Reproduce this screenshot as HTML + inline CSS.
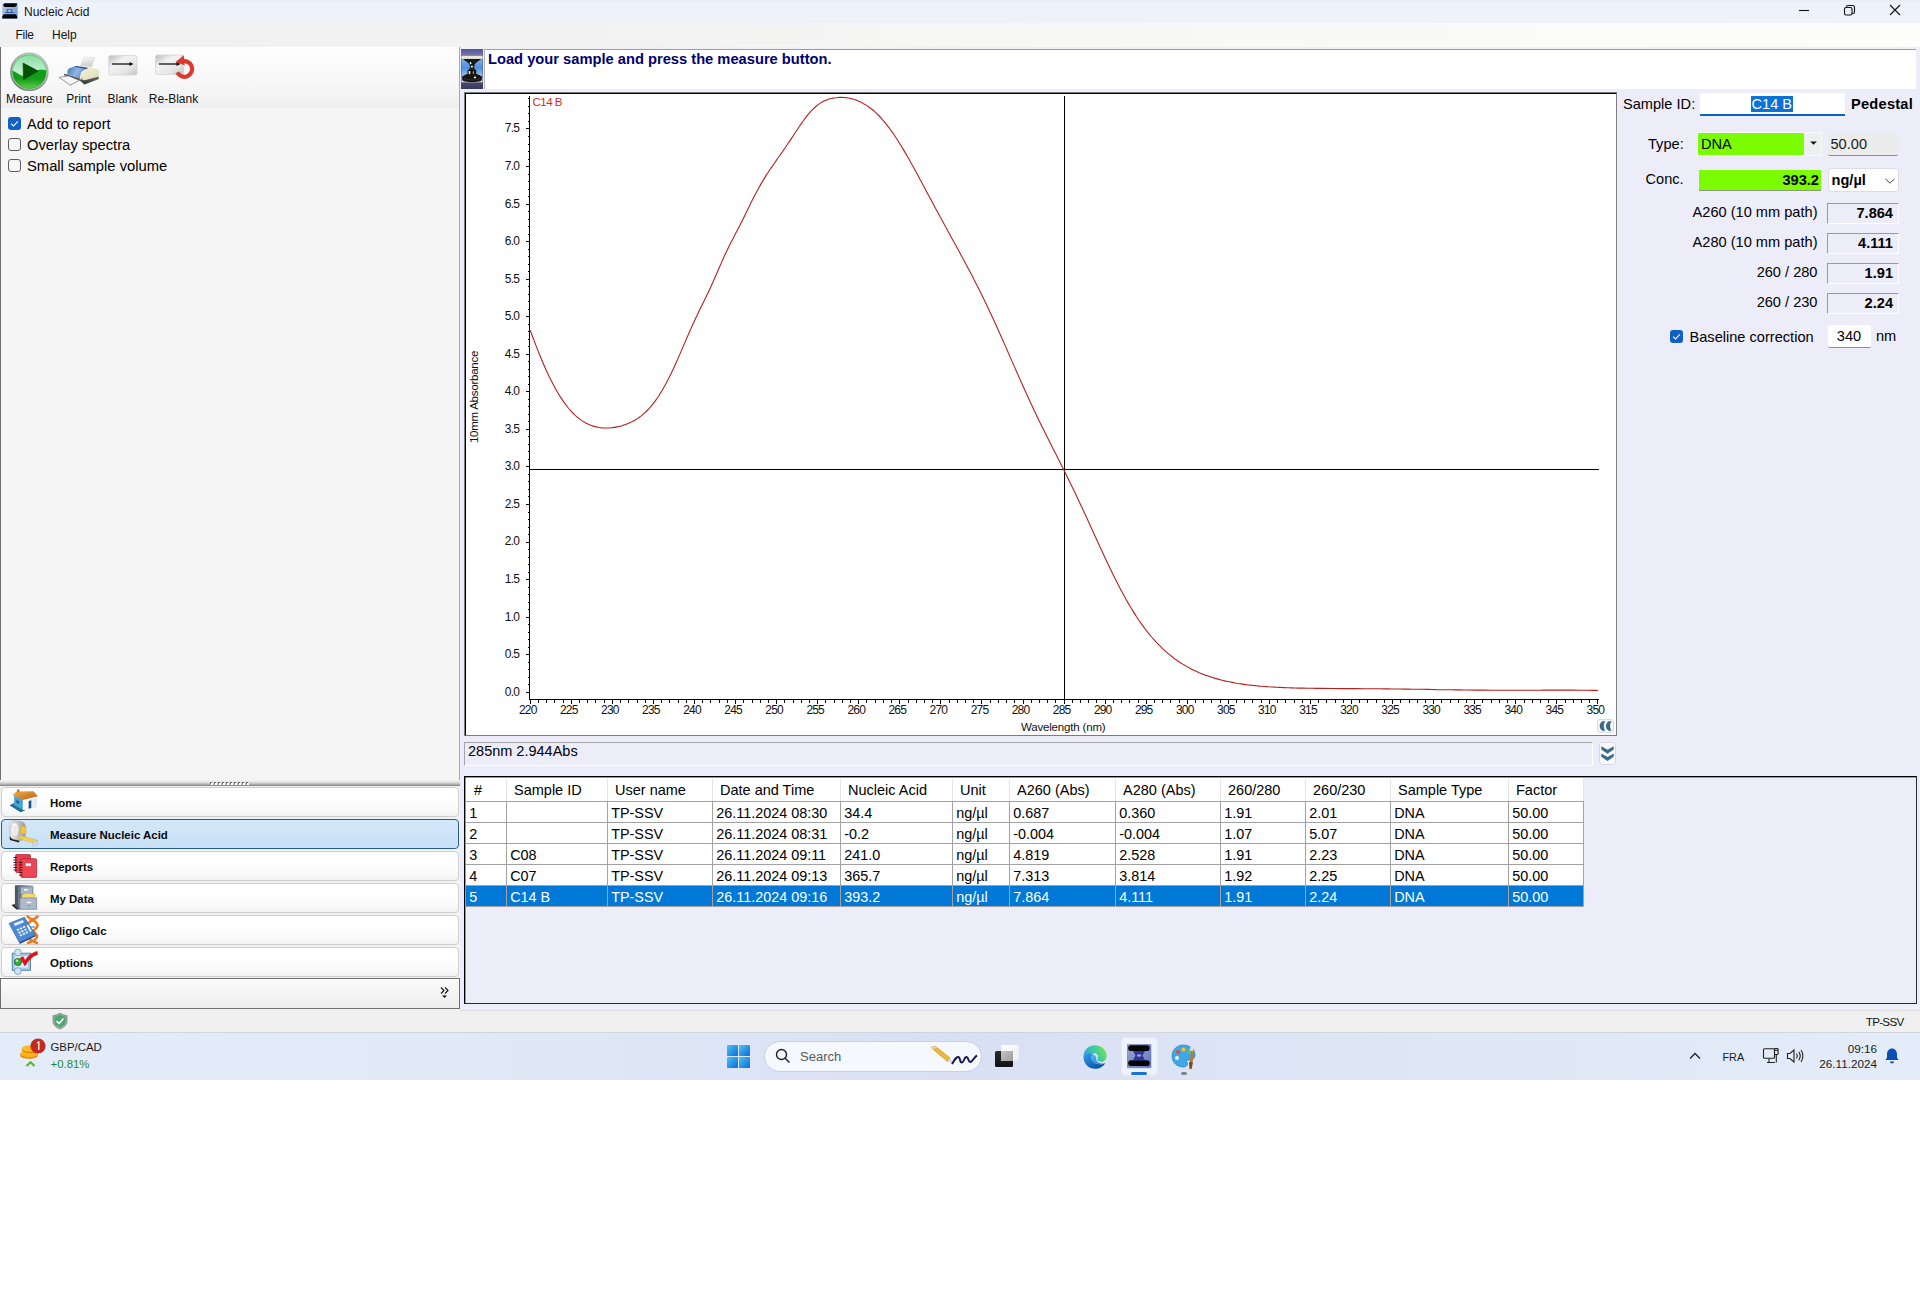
<!DOCTYPE html>
<html><head><meta charset="utf-8"><title>Nucleic Acid</title>
<style>
*{box-sizing:border-box;margin:0;padding:0}
html,body{width:1920px;height:1312px;background:#fff;overflow:hidden}
body{font-family:"Liberation Sans",sans-serif;color:#000;position:relative;font-size:14.5px}
.a{position:absolute;white-space:pre}
.t{position:absolute;white-space:pre;line-height:1}
.b{font-weight:700}
</style></head><body>
<div class="a" style="left:0;top:0;width:1920px;height:23px;background:linear-gradient(180deg,#e7ebf5 0,#ecf0f9 2px,#eef3fb 5px,#eef3fb 19px,#f0f2f6 23px)"></div>
<svg class="a" style="left:2px;top:3px" width="16" height="16" viewBox="2 3 16 16">
<defs><linearGradient id="gTi" x1="0" y1="0" x2="1" y2="1"><stop offset="0" stop-color="#b4cdf0"/><stop offset="1" stop-color="#6f93c8"/></linearGradient></defs>
<rect x="2.200" y="3.200" width="15.500" height="15.500" fill="url(#gTi)"/>
<path d="M3,5.300L4.500,3.300H16.800V5.500L15,7.100H4.600Z" fill="#050608"/>
<path d="M4,14.200H15.500L17,16V18.500H2.300V16Z" fill="#050608"/>
<path d="M6.500,9.200H12.500V10L11.800,10.300V11.600L13.800,12.300V12.900H5.200V12.300L7.200,11.600V10.300L6.500,10Z" fill="#2c5c9c"/>
<ellipse cx="9.500" cy="10.900" rx="1.600" ry="0.800" fill="#bfe0ff"/>
</svg>
<div class="t" style="left:24px;top:6px;font-size:12px;color:#111">Nucleic Acid</div>
<svg class="a" style="left:1790px;top:0" width="120" height="22" viewBox="0 0 120 22" fill="none" stroke="#111" stroke-width="1.1">
<path d="M9,10.5H19"/>
<rect x="54.5" y="7.5" width="7.5" height="7.5" rx="1.5"/><path d="M56.5,7.5V7A1.5,1.5 0 0 1 58,5.5H62.5A2,2 0 0 1 64.5,7.5V12A1.5,1.5 0 0 1 63,13.5H62"/>
<path d="M100,5L110,15M110,5L100,15"/>
</svg>
<div class="a" style="left:0;top:23px;width:1920px;height:24px;background:linear-gradient(90deg,#f0f0f0 0%,#f3f3f3 35%,#f6f6f5 50%,#fdfdfc 100%)"></div>
<div class="t" style="left:15.5px;top:28.5px;font-size:12px;letter-spacing:-0.300px;color:#111">File</div>
<div class="t" style="left:52px;top:28.5px;font-size:12px;color:#111">Help</div>
<div class="a" style="left:0;top:47px;width:460px;height:962px;background:#f5f5f5"></div>
<div class="a" style="left:460px;top:47px;width:1460px;height:963px;background:#ededfa"></div>
<div class="a" style="left:0;top:47px;width:459px;height:61px;background:linear-gradient(180deg,#fdfdfd 0%,#f8f8f8 55%,#efefef 100%)"></div>
<div class="a" style="left:0;top:47px;width:1px;height:733px;background:#6d6d6d"></div>
<div class="a" style="left:459px;top:47px;width:1px;height:733px;background:#a9a9a9"></div>
<svg class="a" style="left:0;top:47px" width="240" height="62" viewBox="0 47 240 62">
<defs>
<linearGradient id="gRing" x1="0.800" y1="0" x2="0.200" y2="1"><stop offset="0" stop-color="#c4c4c4"/><stop offset="1" stop-color="#737373"/></linearGradient><linearGradient id="gMint" x1="0" y1="0" x2="0" y2="1"><stop offset="0" stop-color="#7cd894"/><stop offset="0.250" stop-color="#a2e6b4"/><stop offset="0.500" stop-color="#c0f0cc"/><stop offset="1" stop-color="#c6f2d0"/></linearGradient>
<linearGradient id="gGreen" x1="0" y1="0" x2="0" y2="1"><stop offset="0" stop-color="#12a01a"/><stop offset="0.400" stop-color="#139c18"/><stop offset="0.700" stop-color="#4cbf3a"/><stop offset="1" stop-color="#6fd24a"/></linearGradient>
<linearGradient id="gBtn" x1="0" y1="0" x2="1" y2="1"><stop offset="0" stop-color="#b9b9b9"/><stop offset="0.35" stop-color="#f2f2f2"/><stop offset="0.7" stop-color="#e6e6e6"/><stop offset="1" stop-color="#c2c2c2"/></linearGradient>
<linearGradient id="gPrB" x1="0" y1="0.300" x2="1" y2="0.600"><stop offset="0" stop-color="#4f7dbd"/><stop offset="0.450" stop-color="#8fb6e6"/><stop offset="1" stop-color="#4d78b8"/></linearGradient><linearGradient id="gPap" x1="0" y1="0" x2="0.300" y2="1"><stop offset="0" stop-color="#fafafa"/><stop offset="1" stop-color="#cfcfd2"/></linearGradient><linearGradient id="gPrC" x1="0" y1="0" x2="1" y2="1"><stop offset="0" stop-color="#f3f2da"/><stop offset="1" stop-color="#dddbb2"/></linearGradient><linearGradient id="gPrD" x1="0" y1="0" x2="0" y2="1"><stop offset="0" stop-color="#6a7268"/><stop offset="1" stop-color="#2c322c"/></linearGradient>
</defs>
<circle cx="29.400" cy="71.800" r="19.300" fill="url(#gRing)"/>
<circle cx="29.400" cy="71.800" r="17.700" fill="#b4e6c0"/>
<clipPath id="cpM"><circle cx="29.400" cy="71.800" r="16.900"/></clipPath>
<g clip-path="url(#cpM)"><rect x="10" y="52" width="40" height="40" fill="url(#gMint)"/>
<path d="M10,71C15,69.500 18,75.500 24,76C31,76.500 36,69 42,69.500C45,69.800 47,70.500 50,71.500V93H10Z" fill="url(#gGreen)"/></g>
<circle cx="29.400" cy="71.800" r="16.900" fill="none" stroke="#2f9a3a" stroke-width="0.700" opacity="0.700"/>
<path d="M23.100,63.100L38.200,71.100L23.600,79.600Z" fill="#035204" stroke="#035204" stroke-width="0.800" stroke-linejoin="round"/>
<!-- printer -->
<path d="M83.900,57.300L94.900,57.300L91.500,67.100L80.500,65.900Z" fill="url(#gPap)" stroke="#cfcfcf" stroke-width="0.400"/>
<path d="M64,73.800L67.400,74.400L77.200,77.400L79.900,78.400V80.800L64,75.300Z" fill="#50545a"/>
<path d="M59.200,77.400L68.600,75.900L79.300,80.500L70.200,85.100Z" fill="#f1f1f5" stroke="#6e6e72" stroke-width="0.700"/>
<path d="M61,77.700L68.500,76.600L77.500,80.400L70.200,84Z" fill="#f6f6f9"/>
<path d="M67.400,71.300C67.700,69.500 68.800,68.400 69.900,68L76,65.900L88.500,68L84.500,70.100C82.500,71 81,72.300 80.800,73.800L79.900,78.400L77.200,77.400L67.400,74.400Z" fill="url(#gPrB)"/>
<path d="M76,65.900L88.500,68L86.500,69.100L74,66.700Z" fill="#2f4f86"/>
<path d="M84.500,70.100L88.500,68L92.100,67.700L98.500,69.800C98.900,72 98.900,74.500 98.800,76.500L84.500,80.200L80.500,79L80.800,73.800C81,72.300 82.500,71 84.500,70.100Z" fill="url(#gPrC)"/>
<path d="M80.500,79L84.500,80.200L98.800,76.500V79L84.500,84.500L79.900,80.800Z" fill="url(#gPrD)"/>
<rect x="81.200" y="78.200" width="1.300" height="0.600" fill="#5a5a40"/>
<!-- blank -->
<rect x="108.700" y="55.500" width="28.300" height="19.500" rx="2" fill="url(#gBtn)" stroke="#d5d5d5" stroke-width="0.8"/>
<path d="M112,64H132" stroke="#111" stroke-width="1.3"/><path d="M133.500,64L129.500,62V66Z" fill="#111"/>
<!-- reblank -->
<rect x="155.500" y="55" width="28.300" height="19.500" rx="2" fill="url(#gBtn)" stroke="#d5d5d5" stroke-width="0.8"/>
<path d="M159,64H179" stroke="#111" stroke-width="1.3"/><path d="M180.500,64L176.500,62V66Z" fill="#111"/>
<path d="M181.500,61.700A7.800,7.800 0 1 1 177.300,72.300" fill="none" stroke="#dc3a2e" stroke-width="4.200"/>
<path d="M175.300,62.300L183.800,55.300L184.600,65.300Z" fill="#dc3a2e"/>
</svg>
<div class="t" style="left:6px;top:92.500px;font-size:12px;width:46px;text-align:center;color:#111">Measure</div>
<div class="t" style="left:58px;top:92.500px;font-size:12px;width:41px;text-align:center;color:#111">Print</div>
<div class="t" style="left:102px;top:92.500px;font-size:12px;width:41px;text-align:center;color:#111">Blank</div>
<div class="t" style="left:148px;top:92.500px;font-size:12px;width:51px;text-align:center;color:#111">Re-Blank</div>
<div class="a" style="left:8px;top:117px;width:13px;height:13px;border-radius:3px;background:#0f62c2"></div>
<svg class="a" style="left:8px;top:117px" width="13" height="13" viewBox="0 0 13 13"><path d="M3.200,6.700L5.500,9L9.800,4.300" fill="none" stroke="#fff" stroke-width="1.1"/></svg><div class="a" style="left:8px;top:138px;width:13px;height:13px;border-radius:3px;background:#f7f7f7;border:1px solid #5c5c5c"></div><div class="a" style="left:8px;top:159px;width:13px;height:13px;border-radius:3px;background:#f7f7f7;border:1px solid #5c5c5c"></div><div class="t" style="left:27px;top:116.5px;font-size:14.45px">Add to report</div><div class="t" style="left:27px;top:137.5px;font-size:14.75px">Overlay spectra</div><div class="t" style="left:27px;top:158.5px;font-size:14.75px">Small sample volume</div><div class="a" style="left:0;top:780px;width:460px;height:6px;background:linear-gradient(180deg,#f5f5f5 0%,#eeeeee 14%,#dedede 40%,#b5b5b5 70%,#8b8b8b 93%,#a5a5a5 100%)"></div>
<svg class="a" style="left:210px;top:781.800px" width="42" height="4" viewBox="0 0 42 4" shape-rendering="crispEdges"><g fill="#6e6e6e"><rect x="0" y="0" width="2" height="2"/><rect x="4" y="0" width="2" height="2"/><rect x="8" y="0" width="2" height="2"/><rect x="12" y="0" width="2" height="2"/><rect x="16" y="0" width="2" height="2"/><rect x="20" y="0" width="2" height="2"/><rect x="24" y="0" width="2" height="2"/><rect x="28" y="0" width="2" height="2"/><rect x="32" y="0" width="2" height="2"/><rect x="36" y="0" width="2" height="2"/></g><g fill="#fff"><rect x="1" y="1" width="2" height="2"/><rect x="5" y="1" width="2" height="2"/><rect x="9" y="1" width="2" height="2"/><rect x="13" y="1" width="2" height="2"/><rect x="17" y="1" width="2" height="2"/><rect x="21" y="1" width="2" height="2"/><rect x="25" y="1" width="2" height="2"/><rect x="29" y="1" width="2" height="2"/><rect x="33" y="1" width="2" height="2"/><rect x="37" y="1" width="2" height="2"/></g></svg>
<div class="a" style="left:0;top:786px;width:460px;height:193px;background:#f1f1f1"></div>
<div class="a" style="left:1px;top:787px;width:457.500px;height:29.500px;border-radius:4px;background:linear-gradient(180deg,#ffffff 0%,#fdfdfd 60%,#f3f3f3 100%);border:1px solid #cfcfcf"></div><div class="t b" style="left:50px;top:797.8px;font-size:11.450px;letter-spacing:0;color:#0a0a0a">Home</div><div class="a" style="left:1px;top:819px;width:457.500px;height:29.500px;border-radius:4px;background:linear-gradient(180deg,#d3e8f9,#c9e1f6);border:1px solid #2a5d8f"></div><div class="t b" style="left:50px;top:829.8px;font-size:11.450px;letter-spacing:0;color:#0a0a0a">Measure Nucleic Acid</div><div class="a" style="left:1px;top:851px;width:457.500px;height:29.500px;border-radius:4px;background:linear-gradient(180deg,#ffffff 0%,#fdfdfd 60%,#f3f3f3 100%);border:1px solid #cfcfcf"></div><div class="t b" style="left:50px;top:861.8px;font-size:11.450px;letter-spacing:0;color:#0a0a0a">Reports</div><div class="a" style="left:1px;top:883px;width:457.500px;height:29.500px;border-radius:4px;background:linear-gradient(180deg,#ffffff 0%,#fdfdfd 60%,#f3f3f3 100%);border:1px solid #cfcfcf"></div><div class="t b" style="left:50px;top:893.8px;font-size:11.450px;letter-spacing:0;color:#0a0a0a">My Data</div><div class="a" style="left:1px;top:915px;width:457.500px;height:29.500px;border-radius:4px;background:linear-gradient(180deg,#ffffff 0%,#fdfdfd 60%,#f3f3f3 100%);border:1px solid #cfcfcf"></div><div class="t b" style="left:50px;top:925.8px;font-size:11.450px;letter-spacing:0;color:#0a0a0a">Oligo Calc</div><div class="a" style="left:1px;top:947px;width:457.500px;height:29.500px;border-radius:4px;background:linear-gradient(180deg,#ffffff 0%,#fdfdfd 60%,#f3f3f3 100%);border:1px solid #cfcfcf"></div><div class="t b" style="left:50px;top:957.8px;font-size:11.450px;letter-spacing:0;color:#0a0a0a">Options</div><svg class="a" style="left:0;top:786px" width="48" height="194" viewBox="0 786 48 194">
<defs>
<linearGradient id="gRoof" x1="0" y1="0" x2="1" y2="1"><stop offset="0" stop-color="#f3b04a"/><stop offset="1" stop-color="#b5640f"/></linearGradient>
<linearGradient id="gTape" x1="0" y1="0" x2="1" y2="0"><stop offset="0" stop-color="#f6f6f6"/><stop offset="1" stop-color="#9a9a9a"/></linearGradient>
<linearGradient id="gCab" x1="0" y1="0" x2="1" y2="0"><stop offset="0" stop-color="#5f6e80"/><stop offset="1" stop-color="#aab6c4"/></linearGradient>
</defs>
<!-- home -->
<path d="M9.500,805.300L14.100,803L25.200,810.300L20.600,812.300Z" fill="#1c6e96"/>
<path d="M14.100,795.400L22.900,799.600V809.900L14.100,805Z" fill="#4aa3d8"/>
<path d="M22.900,800.200L37,796.800V806.900L22.900,809.900Z" fill="#fbfcfe"/>
<path d="M30,799L37,797.200V806.900L30,808.500Z" fill="#e3ebf3"/>
<path d="M28.600,800.900L31.300,800.200V808.100L28.600,808.800Z" fill="#17587e"/>
<path d="M16.400,800L19,801.200V803.900L16.400,802.700Z" fill="#1b5f8a"/>
<path d="M12.400,795.600L17.500,790.400L18.300,791.600L33.500,791.200L37.900,796.300L22.900,800.100L14.200,795.800Z" fill="url(#gRoof)"/>
<path d="M17,789.500L19.500,789.200V792L17,792.500Z" fill="#c57a20"/>
<!-- tape measure -->
<path d="M9.500,836.500L19.500,840.500L19,842.500L10,840Z" fill="#1a1a1a"/>
<path d="M10,824C10,821.500 12.500,820.800 15,821L21,821.500C24,822 25.300,824 25.300,827V835C25.300,838.500 23,840.500 19.500,840.500L14,839.500C11,839 10,837 10,834Z" fill="url(#gTape)" stroke="#9a9a9a" stroke-width="0.500"/>
<ellipse cx="14.900" cy="829.500" rx="3.800" ry="6.600" fill="#fdfdfd" stroke="#c2c2c2" stroke-width="0.700"/>
<ellipse cx="15.300" cy="829.800" rx="2.200" ry="4.600" fill="#e4e6ea"/>
<path d="M20.600,826.500H25.900V833.700H20.600Z" fill="#f0c63a" stroke="#c9a227" stroke-width="0.400"/>
<path d="M19.800,835.500L37.300,840.300L36.500,843.800L20,839Z" fill="#f3d34e" stroke="#c2a42c" stroke-width="0.400"/>
<path d="M32.500,842L37.600,840.500L37.800,844.300L33,846Z" fill="#d4d6da" stroke="#a5a8ad" stroke-width="0.400"/>
<!-- reports -->
<rect x="15.500" y="854.500" width="15" height="18" rx="1.200" fill="#e43d4c" stroke="#ac1f2e" stroke-width="0.700"/>
<rect x="20.800" y="858.700" width="15.800" height="18.700" rx="1.200" fill="#ee4454" stroke="#ac1f2e" stroke-width="0.700"/>
<rect x="25.400" y="863" width="5.800" height="3.300" rx="0.600" fill="#fff" stroke="#b4303c" stroke-width="0.400"/>
<g stroke="#3a0a10" stroke-width="0.900"><path d="M13.500,857.500H17M13.500,860H17M13.500,862.500H17M13.500,865H17M13.500,867.500H17M13.500,870H17M19,862.500H22.500M19,865H22.500M19,867.500H22.500M19,870H22.500M19,872.500H22.500M19,875H22.500"/></g>
<!-- my data -->
<path d="M11.400,905L15,904L19.800,909.300L16.500,909.500Z" fill="#2a2f38"/>
<path d="M14.900,885.500L18.700,885V909L14.900,906Z" fill="#4b586a"/>
<path d="M18.700,885L33.500,885.500V898H18.700Z" fill="url(#gCab)"/>
<rect x="20.500" y="887" width="12" height="7.500" fill="#aab6c6" stroke="#6a7686" stroke-width="0.500"/>
<rect x="24" y="889" width="3.800" height="1.600" fill="#f2f4f7"/>
<path d="M21.700,895L26,893.300L35,894V898.700H21.700Z" fill="#f5dc6a" stroke="#c0a030" stroke-width="0.400"/>
<path d="M19.800,897.900H36.600V909.300H19.800Z" fill="#aeb9c9" stroke="#67748a" stroke-width="0.600"/>
<path d="M18.700,898L19.800,897.900V909.300L18.700,909Z" fill="#5c697b"/>
<rect x="26.700" y="901.700" width="4.600" height="1.600" rx="0.500" fill="#f5f7fa"/><path d="M27,905.500H31" stroke="#7b8797" stroke-width="0.800"/>
<!-- oligo calc -->
<g stroke="#2f6fc0" stroke-width="1.200"><path d="M29,918.500H36M30,927H35M30,933H35M29,941.500H36"/></g>
<g stroke="#f07a22" stroke-width="2.600" fill="none" stroke-linecap="round"><path d="M27.500,916.500C31,920 37,921 37.500,925C38,930 29,931 28.500,936C28,940 33,941 37,943"/><path d="M37.500,916.500C34,920 28,921 27.500,925C27,930 36,931 37,936C37.500,940 32,941 28,943"/></g>
<path d="M9.100,923.400L24.400,917.300L35.400,934.900L19.400,942.500Z" fill="#4d8ad2" stroke="#2b62a8" stroke-width="0.700"/>
<path d="M19.400,942.500L35.400,934.900L35.800,936.200L19.800,943.900Z" fill="#1f4f92"/>
<path d="M13.700,923.600L22.900,920L24,922.300L14.900,926Z" fill="#e3eefb"/>
<g fill="#eef5fd"><path d="M16.500,929.500L18.500,928.600L19.400,930.200L17.400,931.100ZM19.500,928.100L21.500,927.200L22.400,928.800L20.400,929.700ZM22.500,926.700L24.500,925.800L25.400,927.400L23.400,928.300ZM18,932.200L20,931.300L20.900,932.900L18.900,933.800ZM21,930.800L23,929.900L23.900,931.500L21.900,932.400ZM24,929.400L26,928.500L26.900,930.100L24.900,931ZM19.500,934.900L21.500,934L22.400,935.600L20.400,936.500ZM22.500,933.500L24.500,932.600L25.400,934.200L23.400,935.100ZM25.500,932.100L27.500,931.200L28.400,932.800L26.400,933.700ZM26.500,925.500L28.300,924.700L31.800,931L30,931.900Z"/></g>
<!-- options -->
<rect x="12.200" y="953.200" width="18.300" height="17.100" fill="#a6c9e6" stroke="#4a7ba8" stroke-width="0.900"/><rect x="15" y="956" width="12.800" height="11.600" fill="#dbeaf6"/>
<circle cx="17.900" cy="952.400" r="3.400" fill="#cfe4f4" stroke="#6f9cc4" stroke-width="0.800"/><circle cx="17.900" cy="971.100" r="3.400" fill="#cfe4f4" stroke="#6f9cc4" stroke-width="0.800"/>
<circle cx="17.900" cy="962" r="3.600" fill="#3aa83a" stroke="#1c6e1c" stroke-width="0.800"/><circle cx="17" cy="960.800" r="1.300" fill="#b9eab0"/>
<path d="M20.200,958L23,956.600L25,960.500C28,955.500 32,952.800 37.200,951.200L37.500,954.500C32,956.500 28,960.500 25,966Z" fill="#e50e14" stroke="#a40a0e" stroke-width="0.400"/>
</svg>
<div class="a" style="left:0;top:978px;width:459.500px;height:31px;border:1px solid #6f6f6f;background:linear-gradient(180deg,#fbfbfb,#ededed)"></div>
<svg class="a" style="left:438px;top:985px" width="14" height="16" viewBox="0 0 14 16"><path d="M3,2.500L6,5.500L3,8.500M7,2.500L10,5.500L7,8.500" fill="none" stroke="#111" stroke-width="1.100"/><path d="M4,10.500H9L6.500,13Z" fill="#111"/></svg>
<div class="a" style="left:0;top:1009px;width:460px;height:23px;background:#f0f0f0"></div><div class="a" style="left:460px;top:1010px;width:1460px;height:22px;background:#f0f0f0;border-top:1px solid #dedede"></div>
<svg class="a" style="left:51px;top:1012px" width="18" height="18" viewBox="0 0 18 18"><path d="M9,1C11.500,2.800 13.500,3.300 16,3.500V9C16,13 12.500,15.800 9,17C5.500,15.800 2,13 2,9V3.500C4.500,3.300 6.500,2.800 9,1Z" fill="#9aaaa3" stroke="#7c8c85" stroke-width="0.8"/><path d="M9,2.800C11,4.100 12.500,4.600 14.500,4.800V9C14.500,12 11.800,14.300 9,15.300C6.200,14.300 3.500,12 3.500,9V4.800C5.500,4.600 7,4.100 9,2.800Z" fill="#4aa868"/><path d="M5.500,9L8,11.500L12.500,6.500" fill="none" stroke="#fff" stroke-width="1.700"/></svg>
<div class="t" style="left:1865.800px;top:1015.700px;font-size:11.600px;letter-spacing:-0.700px;color:#111">TP-SSV</div>
<div class="a" style="left:460px;top:47px;width:1460px;height:2px;background:#f1f0f8"></div>
<svg class="a" style="left:461px;top:49px" width="22" height="40" viewBox="0 0 22 40">
<defs><linearGradient id="gIc" x1="0" y1="0" x2="0" y2="1"><stop offset="0" stop-color="#55558e"/><stop offset="0.150" stop-color="#7474aa"/><stop offset="0.170" stop-color="#55557f"/><stop offset="0.830" stop-color="#4b4b72"/><stop offset="1" stop-color="#38385a"/></linearGradient>
<linearGradient id="gSky" x1="0" y1="0" x2="0" y2="1"><stop offset="0" stop-color="#8fc0f2"/><stop offset="0.450" stop-color="#4f90de"/><stop offset="0.800" stop-color="#9ccaf4"/><stop offset="1" stop-color="#dfe6ec"/></linearGradient></defs>
<rect width="22" height="40" fill="url(#gIc)"/>
<rect x="0.500" y="6.800" width="21" height="26.500" fill="url(#gSky)"/>
<rect x="0.500" y="6.800" width="21" height="3" fill="#ebe6d4"/>
<path d="M1.900,10H20.200C18,12 14.500,13.500 13.400,16L13.200,19.300H8.900L8.700,16C7.600,13.500 4,12 1.900,10Z" fill="#14181a"/>
<path d="M8.900,19.300H13.200L15.300,21.400V24.900C18,25.700 20,26.500 20.900,27.600C21.200,29.500 20.800,31 20.200,31.900C15,33.300 7,33.300 1.900,31.900C1.300,31 1,29.500 1.200,27.600C2.200,26.500 4.200,25.700 6.500,24.900V21.400Z" fill="#15140f"/>
<path d="M3,29.500C8,31.500 14,31.500 19,29.500" fill="none" stroke="#3a3a30" stroke-width="0.800"/>
<ellipse cx="9.600" cy="14.200" rx="0.900" ry="1.100" fill="#f2f4f6"/><ellipse cx="10.900" cy="17.600" rx="1.300" ry="0.900" fill="#e6eaee"/>
<rect x="7.700" y="22" width="1.600" height="3.200" fill="#f4ecd8"/><rect x="11.800" y="22.300" width="1.100" height="2.600" fill="#b9a98a"/><ellipse cx="14" cy="28.400" rx="1.200" ry="0.900" fill="#f6efd8"/>
</svg>
<div class="a" style="left:484px;top:49px;width:1432px;height:40px;background:#fff;border-top:1px solid #9d9d9d;border-left:1px solid #b5b5b5"></div>
<div class="t b" style="left:488px;top:51.500px;font-size:14.700px;color:#00006e">Load your sample and press the measure button.</div>
<div class="a" style="left:464px;top:92px;width:1153px;height:644px;background:#fff;border-top:2px solid #000;border-left:2px solid #000;border-right:1px solid #7d7d7d;border-bottom:1px solid #7d7d7d"></div>
<div class="a" style="left:464px;top:92px;width:1153px;height:1px;background:#7c7c86"></div><div class="a" style="left:464px;top:92px;width:1px;height:644px;background:#7c7c86"></div>
<svg class="a" style="left:466px;top:94px" width="1150" height="641" viewBox="466 94 1150 641" shape-rendering="crispEdges"><path d="M529.500,96V699.500H1599" fill="none" stroke="#000" stroke-width="1"/><path d="M526,692.5H529M527.5,684.5H529M527.5,677.5H529M527.5,669.5H529M527.5,662.5H529M526,654.5H529M527.5,647.5H529M527.5,639.5H529M527.5,632.5H529M527.5,624.5H529M526,617.5H529M527.5,609.5H529M527.5,602.5H529M527.5,594.5H529M527.5,587.5H529M526,579.5H529M527.5,572.5H529M527.5,564.5H529M527.5,557.5H529M527.5,549.5H529M526,542.5H529M527.5,534.5H529M527.5,527.5H529M527.5,519.5H529M527.5,512.5H529M526,504.5H529M527.5,496.5H529M527.5,489.5H529M527.5,481.5H529M527.5,474.5H529M526,466.5H529M527.5,459.5H529M527.5,451.5H529M527.5,444.5H529M527.5,436.5H529M526,429.5H529M527.5,421.5H529M527.5,414.5H529M527.5,406.5H529M527.5,399.5H529M526,391.5H529M527.5,384.5H529M527.5,376.5H529M527.5,369.5H529M527.5,361.5H529M526,354.5H529M527.5,346.5H529M527.5,339.5H529M527.5,331.5H529M527.5,324.5H529M526,316.5H529M527.5,309.5H529M527.5,301.5H529M527.5,294.5H529M527.5,286.5H529M526,279.5H529M527.5,271.5H529M527.5,264.5H529M527.5,256.5H529M527.5,249.5H529M526,241.5H529M527.5,234.5H529M527.5,226.5H529M527.5,219.5H529M527.5,211.5H529M526,204.5H529M527.5,196.5H529M527.5,189.5H529M527.5,181.5H529M527.5,174.5H529M526,166.5H529M527.5,159.5H529M527.5,151.5H529M527.5,144.5H529M527.5,136.5H529M526,128.5H529M527.5,121.5H529M527.5,113.5H529M527.5,106.5H529M527.5,98.5H529" stroke="#000" stroke-width="1" fill="none"/><path d="M530.5,700V704M538.5,700V702.5M546.5,700V702.5M554.5,700V702.5M563.5,700V702.5M571.5,700V704M579.5,700V702.5M587.5,700V702.5M595.5,700V702.5M604.5,700V702.5M612.5,700V704M620.5,700V702.5M628.5,700V702.5M637.5,700V702.5M645.5,700V702.5M653.5,700V704M661.5,700V702.5M669.5,700V702.5M678.5,700V702.5M686.5,700V702.5M694.5,700V704M702.5,700V702.5M710.5,700V702.5M719.5,700V702.5M727.5,700V702.5M735.5,700V704M743.5,700V702.5M752.5,700V702.5M760.5,700V702.5M768.5,700V702.5M776.5,700V704M784.5,700V702.5M793.5,700V702.5M801.5,700V702.5M809.5,700V702.5M817.5,700V704M825.5,700V702.5M834.5,700V702.5M842.5,700V702.5M850.5,700V702.5M858.5,700V704M866.5,700V702.5M875.5,700V702.5M883.5,700V702.5M891.5,700V702.5M899.5,700V704M908.5,700V702.5M916.5,700V702.5M924.5,700V702.5M932.5,700V702.5M940.5,700V704M949.5,700V702.5M957.5,700V702.5M965.5,700V702.5M973.5,700V702.5M981.5,700V704M990.5,700V702.5M998.5,700V702.5M1006.5,700V702.5M1014.5,700V702.5M1023.5,700V704M1031.5,700V702.5M1039.5,700V702.5M1047.5,700V702.5M1055.5,700V702.5M1064.5,700V704M1072.5,700V702.5M1080.5,700V702.5M1088.5,700V702.5M1096.5,700V702.5M1105.5,700V704M1113.5,700V702.5M1121.5,700V702.5M1129.5,700V702.5M1138.5,700V702.5M1146.5,700V704M1154.5,700V702.5M1162.5,700V702.5M1170.5,700V702.5M1179.5,700V702.5M1187.5,700V704M1195.5,700V702.5M1203.5,700V702.5M1211.5,700V702.5M1220.5,700V702.5M1228.5,700V704M1236.5,700V702.5M1244.5,700V702.5M1252.5,700V702.5M1261.5,700V702.5M1269.5,700V704M1277.5,700V702.5M1285.5,700V702.5M1294.5,700V702.5M1302.5,700V702.5M1310.5,700V704M1318.5,700V702.5M1326.5,700V702.5M1335.5,700V702.5M1343.5,700V702.5M1351.5,700V704M1359.5,700V702.5M1367.5,700V702.5M1376.5,700V702.5M1384.5,700V702.5M1392.5,700V704M1400.5,700V702.5M1409.5,700V702.5M1417.5,700V702.5M1425.5,700V702.5M1433.5,700V704M1441.5,700V702.5M1450.5,700V702.5M1458.5,700V702.5M1466.5,700V702.5M1474.5,700V704M1482.5,700V702.5M1491.5,700V702.5M1499.5,700V702.5M1507.5,700V702.5M1515.5,700V704M1524.5,700V702.5M1532.5,700V702.5M1540.5,700V702.5M1548.5,700V702.5M1556.5,700V704M1565.5,700V702.5M1573.5,700V702.5M1581.5,700V702.5M1589.5,700V702.5M1597.5,700V704" stroke="#000" stroke-width="1" fill="none"/><path d="M1064.500,96V699M530,469.500H1599" stroke="#000" stroke-width="1" fill="none"/></svg><svg class="a" style="left:466px;top:94px" width="1150" height="641" viewBox="466 94 1150 641"><path d="M530.2,330.1C530.7,331.5 532.2,335.6 533.2,338.3C534.2,340.9 535.2,343.6 536.2,346.1C537.2,348.7 538.2,351.3 539.2,353.7C540.2,356.2 541.2,358.6 542.2,361.0C543.2,363.4 544.2,365.7 545.2,367.9C546.2,370.1 547.2,372.3 548.2,374.4C549.2,376.6 550.2,378.6 551.2,380.6C552.2,382.6 553.2,384.5 554.2,386.3C555.2,388.2 556.2,390.0 557.2,391.7C558.2,393.4 559.2,395.0 560.2,396.6C561.2,398.2 562.2,399.7 563.2,401.1C564.2,402.6 565.2,403.9 566.2,405.2C567.2,406.6 568.2,407.8 569.2,409.0C570.2,410.1 571.2,411.3 572.2,412.3C573.2,413.4 574.2,414.3 575.2,415.3C576.2,416.2 577.2,417.1 578.2,417.9C579.2,418.7 580.2,419.4 581.2,420.1C582.2,420.8 583.2,421.5 584.2,422.1C585.2,422.6 586.2,423.2 587.2,423.7C588.2,424.2 589.2,424.6 590.2,425.0C591.2,425.4 592.2,425.8 593.2,426.1C594.2,426.4 595.2,426.7 596.2,426.9C597.2,427.1 598.2,427.3 599.2,427.5C600.2,427.6 601.2,427.8 602.2,427.9C603.2,427.9 604.2,428.0 605.2,428.0C606.2,428.0 607.2,428.0 608.2,428.0C609.2,428.0 610.2,427.9 611.2,427.8C612.2,427.7 613.2,427.6 614.2,427.4C615.2,427.3 616.2,427.1 617.2,426.9C618.2,426.7 619.2,426.5 620.2,426.2C621.2,425.9 622.2,425.7 623.2,425.3C624.2,425.0 625.2,424.7 626.2,424.3C627.2,423.9 628.2,423.5 629.2,423.1C630.2,422.6 631.2,422.2 632.2,421.6C633.2,421.1 634.2,420.6 635.2,420.0C636.2,419.4 637.2,418.8 638.2,418.1C639.2,417.4 640.2,416.6 641.2,415.9C642.2,415.1 643.2,414.2 644.2,413.3C645.2,412.4 646.2,411.5 647.2,410.5C648.2,409.5 649.2,408.4 650.2,407.3C651.2,406.1 652.2,404.9 653.2,403.6C654.2,402.4 655.2,401.0 656.2,399.6C657.2,398.2 658.2,396.7 659.2,395.2C660.2,393.6 661.2,392.0 662.2,390.3C663.2,388.6 664.2,386.9 665.2,385.0C666.2,383.2 667.2,381.3 668.2,379.3C669.2,377.4 670.2,375.4 671.2,373.3C672.2,371.2 673.2,369.1 674.2,366.9C675.2,364.7 676.2,362.5 677.2,360.2C678.2,358.0 679.2,355.7 680.2,353.4C681.2,351.1 682.2,348.7 683.2,346.4C684.2,344.1 685.2,341.7 686.2,339.4C687.2,337.1 688.2,334.8 689.2,332.5C690.2,330.2 691.2,328.0 692.2,325.7C693.2,323.5 694.2,321.4 695.2,319.2C696.2,317.1 697.2,315.0 698.2,312.9C699.2,310.9 700.2,308.8 701.2,306.8C702.2,304.8 703.2,302.8 704.2,300.7C705.2,298.7 706.2,296.7 707.2,294.6C708.2,292.5 709.2,290.3 710.2,288.2C711.2,286.0 712.2,283.8 713.2,281.6C714.2,279.3 715.2,277.0 716.2,274.7C717.2,272.4 718.2,270.1 719.2,267.8C720.2,265.5 721.2,263.2 722.2,260.9C723.2,258.7 724.2,256.4 725.2,254.3C726.2,252.1 727.2,250.0 728.2,248.0C729.2,245.9 730.2,243.9 731.2,242.0C732.2,240.0 733.2,238.1 734.2,236.2C735.2,234.3 736.2,232.4 737.2,230.5C738.2,228.6 739.2,226.7 740.2,224.7C741.2,222.7 742.2,220.7 743.2,218.7C744.2,216.7 745.2,214.6 746.2,212.6C747.2,210.5 748.2,208.4 749.2,206.4C750.2,204.4 751.2,202.3 752.2,200.3C753.2,198.3 754.2,196.4 755.2,194.5C756.2,192.6 757.2,190.7 758.2,188.9C759.2,187.1 760.2,185.3 761.2,183.6C762.2,181.9 763.2,180.2 764.2,178.6C765.2,176.9 766.2,175.4 767.2,173.8C768.2,172.3 769.2,170.8 770.2,169.3C771.2,167.8 772.2,166.3 773.2,164.9C774.2,163.5 775.2,162.0 776.2,160.6C777.2,159.2 778.2,157.8 779.2,156.3C780.2,154.9 781.2,153.5 782.2,152.1C783.2,150.6 784.2,149.2 785.2,147.7C786.2,146.3 787.2,144.8 788.2,143.3C789.2,141.9 790.2,140.4 791.2,138.9C792.2,137.4 793.2,135.9 794.2,134.3C795.2,132.8 796.2,131.3 797.2,129.8C798.2,128.3 799.2,126.8 800.2,125.3C801.2,123.9 802.2,122.4 803.2,121.0C804.2,119.6 805.2,118.2 806.2,116.9C807.2,115.6 808.2,114.4 809.2,113.2C810.2,112.0 811.2,110.9 812.2,109.9C813.2,108.9 814.2,107.9 815.2,107.0C816.2,106.2 817.2,105.4 818.2,104.6C819.2,103.9 820.2,103.2 821.2,102.6C822.2,102.1 823.2,101.5 824.2,101.0C825.2,100.6 826.2,100.2 827.2,99.8C828.2,99.4 829.2,99.1 830.2,98.8C831.2,98.5 832.2,98.3 833.2,98.1C834.2,97.9 835.2,97.8 836.2,97.7C837.2,97.5 838.2,97.5 839.2,97.4C840.2,97.4 841.2,97.4 842.2,97.4C843.2,97.5 844.2,97.5 845.2,97.6C846.2,97.7 847.2,97.9 848.2,98.0C849.2,98.2 850.2,98.4 851.2,98.6C852.2,98.9 853.2,99.2 854.2,99.5C855.2,99.8 856.2,100.1 857.2,100.5C858.2,100.9 859.2,101.4 860.2,101.8C861.2,102.3 862.2,102.8 863.2,103.4C864.2,103.9 865.2,104.5 866.2,105.1C867.2,105.8 868.2,106.5 869.2,107.2C870.2,107.9 871.2,108.7 872.2,109.5C873.2,110.3 874.2,111.2 875.2,112.1C876.2,113.0 877.2,114.0 878.2,115.0C879.2,116.0 880.2,117.0 881.2,118.1C882.2,119.2 883.2,120.4 884.2,121.6C885.2,122.8 886.2,124.0 887.2,125.3C888.2,126.6 889.2,127.9 890.2,129.3C891.2,130.6 892.2,132.0 893.2,133.5C894.2,135.0 895.2,136.4 896.2,138.0C897.2,139.5 898.2,141.1 899.2,142.7C900.2,144.3 901.2,145.9 902.2,147.6C903.2,149.2 904.2,150.9 905.2,152.6C906.2,154.3 907.2,156.1 908.2,157.8C909.2,159.6 910.2,161.4 911.2,163.2C912.2,164.9 913.2,166.8 914.2,168.6C915.2,170.4 916.2,172.3 917.2,174.1C918.2,175.9 919.2,177.8 920.2,179.7C921.2,181.5 922.2,183.4 923.2,185.3C924.2,187.1 925.2,189.0 926.2,190.9C927.2,192.8 928.2,194.6 929.2,196.5C930.2,198.4 931.2,200.2 932.2,202.1C933.2,204.0 934.2,205.8 935.2,207.7C936.2,209.5 937.2,211.4 938.2,213.2C939.2,215.1 940.2,216.9 941.2,218.8C942.2,220.6 943.2,222.4 944.2,224.3C945.2,226.1 946.2,227.9 947.2,229.7C948.2,231.6 949.2,233.4 950.2,235.2C951.2,237.0 952.2,238.9 953.2,240.7C954.2,242.5 955.2,244.3 956.2,246.1C957.2,248.0 958.2,249.8 959.2,251.6C960.2,253.5 961.2,255.3 962.2,257.2C963.2,259.0 964.2,260.9 965.2,262.7C966.2,264.6 967.2,266.5 968.2,268.4C969.2,270.3 970.2,272.2 971.2,274.1C972.2,276.0 973.2,277.9 974.2,279.9C975.2,281.8 976.2,283.8 977.2,285.8C978.2,287.7 979.2,289.7 980.2,291.7C981.2,293.8 982.2,295.8 983.2,297.8C984.2,299.9 985.2,302.0 986.2,304.1C987.2,306.1 988.2,308.3 989.2,310.4C990.2,312.5 991.2,314.6 992.2,316.8C993.2,319.0 994.2,321.2 995.2,323.3C996.2,325.5 997.2,327.7 998.2,330.0C999.2,332.2 1000.2,334.4 1001.2,336.7C1002.2,338.9 1003.2,341.2 1004.2,343.4C1005.2,345.7 1006.2,348.0 1007.2,350.2C1008.2,352.5 1009.2,354.8 1010.2,357.1C1011.2,359.3 1012.2,361.6 1013.2,363.9C1014.2,366.2 1015.2,368.5 1016.2,370.7C1017.2,373.0 1018.2,375.3 1019.2,377.5C1020.2,379.8 1021.2,382.0 1022.2,384.3C1023.2,386.5 1024.2,388.7 1025.2,390.9C1026.2,393.1 1027.2,395.3 1028.2,397.5C1029.2,399.7 1030.2,401.9 1031.2,404.0C1032.2,406.2 1033.2,408.3 1034.2,410.4C1035.2,412.5 1036.2,414.6 1037.2,416.7C1038.2,418.8 1039.2,420.9 1040.2,422.9C1041.2,425.0 1042.2,427.0 1043.2,429.0C1044.2,431.0 1045.2,433.0 1046.2,435.0C1047.2,437.0 1048.2,439.0 1049.2,441.0C1050.2,443.0 1051.2,445.0 1052.2,446.9C1053.2,448.9 1054.2,450.9 1055.2,452.8C1056.2,454.8 1057.2,456.8 1058.2,458.8C1059.2,460.7 1060.2,462.7 1061.2,464.7C1062.2,466.7 1063.2,468.7 1064.2,470.7C1065.2,472.7 1066.2,474.7 1067.2,476.7C1068.2,478.8 1069.2,480.8 1070.2,482.9C1071.2,484.9 1072.2,487.0 1073.2,489.1C1074.2,491.1 1075.2,493.2 1076.2,495.3C1077.2,497.4 1078.2,499.6 1079.2,501.7C1080.2,503.8 1081.2,506.0 1082.2,508.1C1083.2,510.3 1084.2,512.4 1085.2,514.6C1086.2,516.8 1087.2,518.9 1088.2,521.1C1089.2,523.3 1090.2,525.5 1091.2,527.7C1092.2,529.9 1093.2,532.1 1094.2,534.2C1095.2,536.4 1096.2,538.6 1097.2,540.8C1098.2,543.0 1099.2,545.2 1100.2,547.3C1101.2,549.5 1102.2,551.7 1103.2,553.8C1104.2,556.0 1105.2,558.1 1106.2,560.2C1107.2,562.3 1108.2,564.5 1109.2,566.5C1110.2,568.6 1111.2,570.7 1112.2,572.7C1113.2,574.8 1114.2,576.8 1115.2,578.8C1116.2,580.8 1117.2,582.8 1118.2,584.7C1119.2,586.7 1120.2,588.6 1121.2,590.5C1122.2,592.3 1123.2,594.2 1124.2,596.0C1125.2,597.8 1126.2,599.6 1127.2,601.4C1128.2,603.1 1129.2,604.8 1130.2,606.5C1131.2,608.2 1132.2,609.8 1133.2,611.4C1134.2,613.1 1135.2,614.6 1136.2,616.2C1137.2,617.7 1138.2,619.2 1139.2,620.7C1140.2,622.1 1141.2,623.6 1142.2,624.9C1143.2,626.3 1144.2,627.7 1145.2,629.0C1146.2,630.3 1147.2,631.6 1148.2,632.9C1149.2,634.1 1150.2,635.3 1151.2,636.5C1152.2,637.7 1153.2,638.8 1154.2,639.9C1155.2,641.1 1156.2,642.1 1157.2,643.2C1158.2,644.2 1159.2,645.3 1160.2,646.2C1161.2,647.2 1162.2,648.2 1163.2,649.1C1164.2,650.1 1165.2,651.0 1166.2,651.8C1167.2,652.7 1168.2,653.6 1169.2,654.4C1170.2,655.2 1171.2,656.0 1172.2,656.8C1173.2,657.6 1174.2,658.3 1175.2,659.1C1176.2,659.8 1177.2,660.5 1178.2,661.2C1179.2,661.9 1180.2,662.5 1181.2,663.2C1182.2,663.8 1183.2,664.4 1184.2,665.0C1185.2,665.6 1186.2,666.2 1187.2,666.8C1188.2,667.3 1189.2,667.9 1190.2,668.4C1191.2,668.9 1192.2,669.4 1193.2,669.9C1194.2,670.4 1195.2,670.9 1196.2,671.3C1197.2,671.8 1198.2,672.2 1199.2,672.7C1200.2,673.1 1201.2,673.5 1202.2,673.9C1203.2,674.3 1204.2,674.7 1205.2,675.1C1206.2,675.4 1207.2,675.8 1208.2,676.1C1209.2,676.5 1210.2,676.8 1211.2,677.1C1212.2,677.5 1213.2,677.8 1214.2,678.1C1215.2,678.4 1216.2,678.7 1217.2,678.9C1218.2,679.2 1219.2,679.5 1220.2,679.7C1221.2,680.0 1222.2,680.3 1223.2,680.5C1224.2,680.7 1225.2,681.0 1226.2,681.2C1227.2,681.4 1228.2,681.6 1229.2,681.8C1230.2,682.0 1231.2,682.2 1232.2,682.4C1233.2,682.6 1234.2,682.8 1235.2,683.0C1236.2,683.1 1237.2,683.3 1238.2,683.5C1239.2,683.6 1240.2,683.8 1241.2,683.9C1242.2,684.1 1243.2,684.2 1244.2,684.4C1245.2,684.5 1246.2,684.6 1247.2,684.8C1248.2,684.9 1249.2,685.0 1250.2,685.1C1251.2,685.2 1252.2,685.4 1253.2,685.5C1254.2,685.6 1255.2,685.7 1256.2,685.8C1257.2,685.9 1258.2,686.0 1259.2,686.1C1260.2,686.1 1261.2,686.2 1262.2,686.3C1263.2,686.4 1264.2,686.5 1265.2,686.5C1266.2,686.6 1267.2,686.7 1268.2,686.8C1269.2,686.8 1270.2,686.9 1271.2,687.0C1272.2,687.0 1273.2,687.1 1274.2,687.1C1275.2,687.2 1276.2,687.2 1277.2,687.3C1278.2,687.3 1279.2,687.4 1280.2,687.4C1281.2,687.5 1282.2,687.5 1283.2,687.6C1284.2,687.6 1285.2,687.7 1286.2,687.7C1287.2,687.7 1288.2,687.8 1289.2,687.8C1290.2,687.8 1291.2,687.9 1292.2,687.9C1293.2,687.9 1294.2,688.0 1295.2,688.0C1296.2,688.0 1297.4,688.0 1298.2,688.1C1299.0,688.1 1298.4,688.1 1300.0,688.1C1301.6,688.1 1305.3,688.2 1308.0,688.2C1310.7,688.3 1313.3,688.3 1316.0,688.4C1318.7,688.4 1321.3,688.4 1324.0,688.4C1326.7,688.5 1329.3,688.5 1332.0,688.5C1334.7,688.5 1337.3,688.5 1340.0,688.6C1342.7,688.6 1345.3,688.6 1348.0,688.6C1350.7,688.6 1353.3,688.6 1356.0,688.6C1358.7,688.7 1361.3,688.7 1364.0,688.7C1366.7,688.7 1369.3,688.7 1372.0,688.8C1374.7,688.8 1377.3,688.8 1380.0,688.8C1382.7,688.8 1385.3,688.9 1388.0,688.9C1390.7,688.9 1393.3,689.0 1396.0,689.0C1398.7,689.0 1401.3,689.1 1404.0,689.1C1406.7,689.1 1409.3,689.2 1412.0,689.2C1414.7,689.2 1417.3,689.3 1420.0,689.3C1422.7,689.4 1425.3,689.4 1428.0,689.4C1430.7,689.5 1433.3,689.5 1436.0,689.6C1438.7,689.6 1441.3,689.6 1444.0,689.7C1446.7,689.7 1449.3,689.8 1452.0,689.8C1454.7,689.8 1457.3,689.9 1460.0,689.9C1462.7,689.9 1465.3,690.0 1468.0,690.0C1470.7,690.0 1473.3,690.0 1476.0,690.1C1478.7,690.1 1481.3,690.1 1484.0,690.1C1486.7,690.2 1489.3,690.2 1492.0,690.2C1494.7,690.2 1497.3,690.2 1500.0,690.2C1502.7,690.2 1505.3,690.2 1508.0,690.2C1510.7,690.2 1513.3,690.2 1516.0,690.2C1518.7,690.2 1521.3,690.2 1524.0,690.2C1526.7,690.2 1529.3,690.2 1532.0,690.2C1534.7,690.2 1537.3,690.2 1540.0,690.2C1542.7,690.2 1545.3,690.1 1548.0,690.1C1550.7,690.1 1553.3,690.1 1556.0,690.1C1558.7,690.1 1561.3,690.1 1564.0,690.1C1566.7,690.1 1569.3,690.1 1572.0,690.1C1574.7,690.1 1577.3,690.1 1580.0,690.2C1582.7,690.2 1585.3,690.2 1588.0,690.3C1590.7,690.3 1594.3,690.4 1596.0,690.4C1597.7,690.5 1597.7,690.5 1598.0,690.5" fill="none" stroke="#b81f1f" stroke-width="1.100"/></svg><div class="t" style="left:495.300px;width:24px;text-align:right;top:685.6px;font-size:12px;letter-spacing:-0.700px;color:#111">0.0</div><div class="t" style="left:495.300px;width:24px;text-align:right;top:648.1px;font-size:12px;letter-spacing:-0.700px;color:#111">0.5</div><div class="t" style="left:495.300px;width:24px;text-align:right;top:610.5px;font-size:12px;letter-spacing:-0.700px;color:#111">1.0</div><div class="t" style="left:495.300px;width:24px;text-align:right;top:573.0px;font-size:12px;letter-spacing:-0.700px;color:#111">1.5</div><div class="t" style="left:495.300px;width:24px;text-align:right;top:535.4px;font-size:12px;letter-spacing:-0.700px;color:#111">2.0</div><div class="t" style="left:495.300px;width:24px;text-align:right;top:497.9px;font-size:12px;letter-spacing:-0.700px;color:#111">2.5</div><div class="t" style="left:495.300px;width:24px;text-align:right;top:460.3px;font-size:12px;letter-spacing:-0.700px;color:#111">3.0</div><div class="t" style="left:495.300px;width:24px;text-align:right;top:422.8px;font-size:12px;letter-spacing:-0.700px;color:#111">3.5</div><div class="t" style="left:495.300px;width:24px;text-align:right;top:385.2px;font-size:12px;letter-spacing:-0.700px;color:#111">4.0</div><div class="t" style="left:495.300px;width:24px;text-align:right;top:347.7px;font-size:12px;letter-spacing:-0.700px;color:#111">4.5</div><div class="t" style="left:495.300px;width:24px;text-align:right;top:310.1px;font-size:12px;letter-spacing:-0.700px;color:#111">5.0</div><div class="t" style="left:495.300px;width:24px;text-align:right;top:272.6px;font-size:12px;letter-spacing:-0.700px;color:#111">5.5</div><div class="t" style="left:495.300px;width:24px;text-align:right;top:235.0px;font-size:12px;letter-spacing:-0.700px;color:#111">6.0</div><div class="t" style="left:495.300px;width:24px;text-align:right;top:197.5px;font-size:12px;letter-spacing:-0.700px;color:#111">6.5</div><div class="t" style="left:495.300px;width:24px;text-align:right;top:160.0px;font-size:12px;letter-spacing:-0.700px;color:#111">7.0</div><div class="t" style="left:495.300px;width:24px;text-align:right;top:122.4px;font-size:12px;letter-spacing:-0.700px;color:#111">7.5</div><div class="t" style="left:507.8px;width:40px;text-align:center;top:704px;font-size:12px;letter-spacing:-0.800px;color:#111">220</div><div class="t" style="left:548.8px;width:40px;text-align:center;top:704px;font-size:12px;letter-spacing:-0.800px;color:#111">225</div><div class="t" style="left:589.9px;width:40px;text-align:center;top:704px;font-size:12px;letter-spacing:-0.800px;color:#111">230</div><div class="t" style="left:630.9px;width:40px;text-align:center;top:704px;font-size:12px;letter-spacing:-0.800px;color:#111">235</div><div class="t" style="left:672.0px;width:40px;text-align:center;top:704px;font-size:12px;letter-spacing:-0.800px;color:#111">240</div><div class="t" style="left:713.1px;width:40px;text-align:center;top:704px;font-size:12px;letter-spacing:-0.800px;color:#111">245</div><div class="t" style="left:754.1px;width:40px;text-align:center;top:704px;font-size:12px;letter-spacing:-0.800px;color:#111">250</div><div class="t" style="left:795.2px;width:40px;text-align:center;top:704px;font-size:12px;letter-spacing:-0.800px;color:#111">255</div><div class="t" style="left:836.3px;width:40px;text-align:center;top:704px;font-size:12px;letter-spacing:-0.800px;color:#111">260</div><div class="t" style="left:877.3px;width:40px;text-align:center;top:704px;font-size:12px;letter-spacing:-0.800px;color:#111">265</div><div class="t" style="left:918.4px;width:40px;text-align:center;top:704px;font-size:12px;letter-spacing:-0.800px;color:#111">270</div><div class="t" style="left:959.5px;width:40px;text-align:center;top:704px;font-size:12px;letter-spacing:-0.800px;color:#111">275</div><div class="t" style="left:1000.5px;width:40px;text-align:center;top:704px;font-size:12px;letter-spacing:-0.800px;color:#111">280</div><div class="t" style="left:1041.6px;width:40px;text-align:center;top:704px;font-size:12px;letter-spacing:-0.800px;color:#111">285</div><div class="t" style="left:1082.7px;width:40px;text-align:center;top:704px;font-size:12px;letter-spacing:-0.800px;color:#111">290</div><div class="t" style="left:1123.7px;width:40px;text-align:center;top:704px;font-size:12px;letter-spacing:-0.800px;color:#111">295</div><div class="t" style="left:1164.8px;width:40px;text-align:center;top:704px;font-size:12px;letter-spacing:-0.800px;color:#111">300</div><div class="t" style="left:1205.9px;width:40px;text-align:center;top:704px;font-size:12px;letter-spacing:-0.800px;color:#111">305</div><div class="t" style="left:1246.9px;width:40px;text-align:center;top:704px;font-size:12px;letter-spacing:-0.800px;color:#111">310</div><div class="t" style="left:1288.0px;width:40px;text-align:center;top:704px;font-size:12px;letter-spacing:-0.800px;color:#111">315</div><div class="t" style="left:1329.0px;width:40px;text-align:center;top:704px;font-size:12px;letter-spacing:-0.800px;color:#111">320</div><div class="t" style="left:1370.1px;width:40px;text-align:center;top:704px;font-size:12px;letter-spacing:-0.800px;color:#111">325</div><div class="t" style="left:1411.2px;width:40px;text-align:center;top:704px;font-size:12px;letter-spacing:-0.800px;color:#111">330</div><div class="t" style="left:1452.2px;width:40px;text-align:center;top:704px;font-size:12px;letter-spacing:-0.800px;color:#111">335</div><div class="t" style="left:1493.3px;width:40px;text-align:center;top:704px;font-size:12px;letter-spacing:-0.800px;color:#111">340</div><div class="t" style="left:1534.4px;width:40px;text-align:center;top:704px;font-size:12px;letter-spacing:-0.800px;color:#111">345</div><div class="t" style="left:1575.4px;width:40px;text-align:center;top:704px;font-size:12px;letter-spacing:-0.800px;color:#111">350</div><div class="t" style="left:532.500px;top:97px;font-size:11.500px;letter-spacing:-0.500px;color:#cf2a2a">C14 B</div>
<div class="t" style="left:1021px;top:721.500px;font-size:11.500px;letter-spacing:-0.180px;color:#111">Wavelength (nm)</div>
<div class="t" style="left:475.300px;top:397px;font-size:11.500px;letter-spacing:-0.250px;color:#111;transform:translate(-50%,-50%) rotate(-90deg)">10mm Absorbance</div>
<div class="a" style="left:1596.500px;top:718.500px;width:17px;height:14px;border:1px solid #d4d9e2;border-radius:3px;background:#f6f8fc"></div>
<svg class="a" style="left:1596.500px;top:718.500px" width="17" height="14" viewBox="0 0 17 14"><path d="M8.300,2.300C6.300,4.500 6.300,9.500 8.300,11.700L5.300,11.700C1.800,9.300 1.800,4.700 5.300,2.300Z M14.600,2.300C12.600,4.500 12.600,9.500 14.600,11.700L11.600,11.700C8.100,9.300 8.100,4.700 11.600,2.300Z" fill="#3d6a8a"/></svg>
<div class="a" style="left:464px;top:742px;width:1129px;height:23.500px;border-top:1px solid #a5a5a5;border-left:1px solid #a5a5a5;border-bottom:1px solid #fff;border-right:1px solid #fff"></div>
<div class="t" style="left:468px;top:744px;font-size:14.500px">285nm 2.944Abs</div>
<div class="a" style="left:1598.500px;top:742px;width:17px;height:23px;border:1px solid #d4d9e2;border-radius:3px;background:#f6f8fc"></div>
<svg class="a" style="left:1598.500px;top:742px" width="17" height="23" viewBox="0 0 17 23"><path d="M2.300,4.300L8.500,7.800L14.700,4.300V7.600L8.500,11.800L2.300,7.600Z M2.300,11.500L8.500,15L14.700,11.500V14.800L8.500,19L2.300,14.800Z" fill="#3d6a8a"/></svg>
<div class="t" style="left:1623px;top:96.500px;font-size:14.600px">Sample ID:</div>
<div class="a" style="left:1699.500px;top:93px;width:145px;height:22.500px;background:#fff;border-bottom:2px solid #0a64c0;border-radius:2px 2px 0 0"></div>
<div class="a" style="left:1751px;top:95.500px;width:41.500px;height:16.500px;background:#0b72d8"></div>
<div class="t" style="left:1751.500px;top:96.500px;font-size:14.600px;color:#fff">C14 B</div>
<div class="t b" style="left:1851px;top:96.500px;font-size:14.600px;letter-spacing:0.250px">Pedestal</div>

<div class="t" style="left:1648px;top:136.700px;font-size:14.600px">Type:</div>
<div class="a" style="left:1697px;top:131.500px;width:125px;height:24px;background:#f6f6f8;border:1px solid #f9f9fc"></div>
<div class="a" style="left:1698px;top:132.500px;width:106px;height:22px;background:#7cfc00"></div>
<div class="a" style="left:1804px;top:132.500px;width:17px;height:22px;background:#efefef"></div>
<svg class="a" style="left:1809px;top:140px" width="9" height="6" viewBox="0 0 9 6"><path d="M1.200,1.500H7.800L4.500,4.800Z" fill="#111"/></svg>
<div class="t" style="left:1701px;top:136.700px;font-size:14.600px">DNA</div>
<div class="a" style="left:1828px;top:133px;width:70px;height:22.500px;background:#ececec;border-bottom:1px solid #8f8f8f;border-radius:2px"></div>
<div class="t" style="left:1830.500px;top:136.700px;font-size:14.600px;color:#1a1a1a">50.00</div>

<div class="t" style="left:1645.500px;top:171.700px;font-size:14.600px">Conc.</div>
<div class="a" style="left:1698.500px;top:170px;width:122px;height:21px;background:#7cfc00;border-bottom:1px solid #8b9a78"></div>
<div class="t b" style="left:1740px;width:79px;text-align:right;top:172.700px;font-size:14.600px">393.2</div>
<div class="a" style="left:1827.500px;top:167.500px;width:71px;height:24.500px;background:#fff;border:1px solid #dcdce6;border-radius:3px"></div>
<div class="t b" style="left:1831.500px;top:172.700px;font-size:14.600px">ng/µl</div>
<svg class="a" style="left:1884px;top:177px" width="12" height="8" viewBox="0 0 12 8"><path d="M1.500,1.800L6,6.200L10.500,1.800" fill="none" stroke="#444" stroke-width="1"/></svg>
<div class="t" style="left:1640px;width:177.500px;text-align:right;top:205.0px;font-size:14.600px">A260 (10 mm path)</div><div class="a" style="left:1827px;top:203.3px;width:71.500px;height:20.500px;border-top:1px solid #9a9a9a;border-left:1px solid #9a9a9a;border-right:1px solid #fff;border-bottom:1px solid #fff;background:#ededf9"></div><div class="t b" style="left:1830px;width:63px;text-align:right;top:205.8px;font-size:14.600px">7.864</div><div class="t" style="left:1640px;width:177.500px;text-align:right;top:235.0px;font-size:14.600px">A280 (10 mm path)</div><div class="a" style="left:1827px;top:233.3px;width:71.500px;height:20.500px;border-top:1px solid #9a9a9a;border-left:1px solid #9a9a9a;border-right:1px solid #fff;border-bottom:1px solid #fff;background:#ededf9"></div><div class="t b" style="left:1830px;width:63px;text-align:right;top:235.8px;font-size:14.600px">4.111</div><div class="t" style="left:1640px;width:177.500px;text-align:right;top:265.0px;font-size:14.600px">260 / 280</div><div class="a" style="left:1827px;top:263.3px;width:71.500px;height:20.500px;border-top:1px solid #9a9a9a;border-left:1px solid #9a9a9a;border-right:1px solid #fff;border-bottom:1px solid #fff;background:#ededf9"></div><div class="t b" style="left:1830px;width:63px;text-align:right;top:265.8px;font-size:14.600px">1.91</div><div class="t" style="left:1640px;width:177.500px;text-align:right;top:295.0px;font-size:14.600px">260 / 230</div><div class="a" style="left:1827px;top:293.3px;width:71.500px;height:20.500px;border-top:1px solid #9a9a9a;border-left:1px solid #9a9a9a;border-right:1px solid #fff;border-bottom:1px solid #fff;background:#ededf9"></div><div class="t b" style="left:1830px;width:63px;text-align:right;top:295.8px;font-size:14.600px">2.24</div><div class="a" style="left:1670px;top:330px;width:13px;height:13px;border-radius:3px;background:#0f62c2"></div>
<svg class="a" style="left:1670px;top:330px" width="13" height="13" viewBox="0 0 13 13"><path d="M3.200,6.700L5.500,9L9.800,4.300" fill="none" stroke="#fff" stroke-width="1.100"/></svg>
<div class="t" style="left:1689.500px;top:329.700px;font-size:14.600px">Baseline correction</div>
<div class="a" style="left:1828px;top:325px;width:42.500px;height:22.500px;background:#fff;border-bottom:1px solid #8f8f8f;border-radius:2px"></div>
<div class="t" style="left:1828px;width:42px;text-align:center;top:329px;font-size:14.600px">340</div>
<div class="t" style="left:1876px;top:329px;font-size:14.600px">nm</div>
<div class="a" style="left:464px;top:776px;width:1453px;height:228px;background:#ededfa;border-top:1px solid #000;border-left:1px solid #000;border-right:1px solid #2a2a2a;border-bottom:1px solid #2a2a2a"></div>
<div class="a" style="left:465px;top:777px;width:1451px;height:1px;background:rgba(0,0,0,0.35)"></div><div class="a" style="left:465px;top:777px;width:1px;height:226px;background:rgba(0,0,0,0.35)"></div>
<div class="a" style="left:466px;top:778px;width:1118px;height:24px;background:#fff"></div><div class="a" style="left:466px;top:802px;width:1118px;height:84px;background:#fff"></div><div class="a" style="left:466px;top:886px;width:1118px;height:21px;background:#0078d7"></div><div class="a" style="left:506px;top:779px;width:1px;height:22px;background:#e4e4e4"></div><div class="a" style="left:607px;top:779px;width:1px;height:22px;background:#e4e4e4"></div><div class="a" style="left:712px;top:779px;width:1px;height:22px;background:#e4e4e4"></div><div class="a" style="left:840px;top:779px;width:1px;height:22px;background:#e4e4e4"></div><div class="a" style="left:952px;top:779px;width:1px;height:22px;background:#e4e4e4"></div><div class="a" style="left:1009px;top:779px;width:1px;height:22px;background:#e4e4e4"></div><div class="a" style="left:1115px;top:779px;width:1px;height:22px;background:#e4e4e4"></div><div class="a" style="left:1220px;top:779px;width:1px;height:22px;background:#e4e4e4"></div><div class="a" style="left:1305px;top:779px;width:1px;height:22px;background:#e4e4e4"></div><div class="a" style="left:1390px;top:779px;width:1px;height:22px;background:#e4e4e4"></div><div class="a" style="left:1508px;top:779px;width:1px;height:22px;background:#e4e4e4"></div><div class="a" style="left:1583px;top:779px;width:1px;height:22px;background:#e4e4e4"></div><div class="a" style="left:466px;top:801px;width:1118px;height:1px;background:#a2a2a2"></div><div class="a" style="left:466px;top:822px;width:1118px;height:1px;background:#a2a2a2"></div><div class="a" style="left:466px;top:843px;width:1118px;height:1px;background:#a2a2a2"></div><div class="a" style="left:466px;top:864px;width:1118px;height:1px;background:#a2a2a2"></div><div class="a" style="left:466px;top:885px;width:1118px;height:1px;background:#a2a2a2"></div><div class="a" style="left:466px;top:906px;width:1118px;height:1px;background:#a2a2a2"></div><div class="a" style="left:506px;top:802px;width:1px;height:105px;background:#a2a2a2"></div><div class="a" style="left:607px;top:802px;width:1px;height:105px;background:#a2a2a2"></div><div class="a" style="left:712px;top:802px;width:1px;height:105px;background:#a2a2a2"></div><div class="a" style="left:840px;top:802px;width:1px;height:105px;background:#a2a2a2"></div><div class="a" style="left:952px;top:802px;width:1px;height:105px;background:#a2a2a2"></div><div class="a" style="left:1009px;top:802px;width:1px;height:105px;background:#a2a2a2"></div><div class="a" style="left:1115px;top:802px;width:1px;height:105px;background:#a2a2a2"></div><div class="a" style="left:1220px;top:802px;width:1px;height:105px;background:#a2a2a2"></div><div class="a" style="left:1305px;top:802px;width:1px;height:105px;background:#a2a2a2"></div><div class="a" style="left:1390px;top:802px;width:1px;height:105px;background:#a2a2a2"></div><div class="a" style="left:1508px;top:802px;width:1px;height:105px;background:#a2a2a2"></div><div class="a" style="left:1583px;top:802px;width:1px;height:105px;background:#a2a2a2"></div><div class="t" style="left:474px;top:782.500px;font-size:14.500px">#</div><div class="t" style="left:514px;top:782.500px;font-size:14.500px">Sample ID</div><div class="t" style="left:615px;top:782.500px;font-size:14.500px">User name</div><div class="t" style="left:720px;top:782.500px;font-size:14.500px">Date and Time</div><div class="t" style="left:848px;top:782.500px;font-size:14.500px">Nucleic Acid</div><div class="t" style="left:960px;top:782.500px;font-size:14.500px">Unit</div><div class="t" style="left:1017px;top:782.500px;font-size:14.500px">A260 (Abs)</div><div class="t" style="left:1123px;top:782.500px;font-size:14.500px">A280 (Abs)</div><div class="t" style="left:1228px;top:782.500px;font-size:14.500px">260/280</div><div class="t" style="left:1313px;top:782.500px;font-size:14.500px">260/230</div><div class="t" style="left:1398px;top:782.500px;font-size:14.500px">Sample Type</div><div class="t" style="left:1516px;top:782.500px;font-size:14.500px">Factor</div><div class="t" style="left:469.2px;top:805.9px;font-size:14.400px;color:#000">1</div><div class="t" style="left:611.2px;top:805.9px;font-size:14.400px;color:#000">TP-SSV</div><div class="t" style="left:716.2px;top:805.9px;font-size:14.400px;color:#000">26.11.2024 08:30</div><div class="t" style="left:844.2px;top:805.9px;font-size:14.400px;color:#000">34.4</div><div class="t" style="left:956.2px;top:805.9px;font-size:14.400px;color:#000">ng/µl</div><div class="t" style="left:1013.2px;top:805.9px;font-size:14.400px;color:#000">0.687</div><div class="t" style="left:1119.2px;top:805.9px;font-size:14.400px;color:#000">0.360</div><div class="t" style="left:1224.2px;top:805.9px;font-size:14.400px;color:#000">1.91</div><div class="t" style="left:1309.2px;top:805.9px;font-size:14.400px;color:#000">2.01</div><div class="t" style="left:1394.2px;top:805.9px;font-size:14.400px;color:#000">DNA</div><div class="t" style="left:1512.2px;top:805.9px;font-size:14.400px;color:#000">50.00</div><div class="t" style="left:469.2px;top:826.9px;font-size:14.400px;color:#000">2</div><div class="t" style="left:611.2px;top:826.9px;font-size:14.400px;color:#000">TP-SSV</div><div class="t" style="left:716.2px;top:826.9px;font-size:14.400px;color:#000">26.11.2024 08:31</div><div class="t" style="left:844.2px;top:826.9px;font-size:14.400px;color:#000">-0.2</div><div class="t" style="left:956.2px;top:826.9px;font-size:14.400px;color:#000">ng/µl</div><div class="t" style="left:1013.2px;top:826.9px;font-size:14.400px;color:#000">-0.004</div><div class="t" style="left:1119.2px;top:826.9px;font-size:14.400px;color:#000">-0.004</div><div class="t" style="left:1224.2px;top:826.9px;font-size:14.400px;color:#000">1.07</div><div class="t" style="left:1309.2px;top:826.9px;font-size:14.400px;color:#000">5.07</div><div class="t" style="left:1394.2px;top:826.9px;font-size:14.400px;color:#000">DNA</div><div class="t" style="left:1512.2px;top:826.9px;font-size:14.400px;color:#000">50.00</div><div class="t" style="left:469.2px;top:847.9px;font-size:14.400px;color:#000">3</div><div class="t" style="left:510.2px;top:847.9px;font-size:14.400px;color:#000">C08</div><div class="t" style="left:611.2px;top:847.9px;font-size:14.400px;color:#000">TP-SSV</div><div class="t" style="left:716.2px;top:847.9px;font-size:14.400px;color:#000">26.11.2024 09:11</div><div class="t" style="left:844.2px;top:847.9px;font-size:14.400px;color:#000">241.0</div><div class="t" style="left:956.2px;top:847.9px;font-size:14.400px;color:#000">ng/µl</div><div class="t" style="left:1013.2px;top:847.9px;font-size:14.400px;color:#000">4.819</div><div class="t" style="left:1119.2px;top:847.9px;font-size:14.400px;color:#000">2.528</div><div class="t" style="left:1224.2px;top:847.9px;font-size:14.400px;color:#000">1.91</div><div class="t" style="left:1309.2px;top:847.9px;font-size:14.400px;color:#000">2.23</div><div class="t" style="left:1394.2px;top:847.9px;font-size:14.400px;color:#000">DNA</div><div class="t" style="left:1512.2px;top:847.9px;font-size:14.400px;color:#000">50.00</div><div class="t" style="left:469.2px;top:868.9px;font-size:14.400px;color:#000">4</div><div class="t" style="left:510.2px;top:868.9px;font-size:14.400px;color:#000">C07</div><div class="t" style="left:611.2px;top:868.9px;font-size:14.400px;color:#000">TP-SSV</div><div class="t" style="left:716.2px;top:868.9px;font-size:14.400px;color:#000">26.11.2024 09:13</div><div class="t" style="left:844.2px;top:868.9px;font-size:14.400px;color:#000">365.7</div><div class="t" style="left:956.2px;top:868.9px;font-size:14.400px;color:#000">ng/µl</div><div class="t" style="left:1013.2px;top:868.9px;font-size:14.400px;color:#000">7.313</div><div class="t" style="left:1119.2px;top:868.9px;font-size:14.400px;color:#000">3.814</div><div class="t" style="left:1224.2px;top:868.9px;font-size:14.400px;color:#000">1.92</div><div class="t" style="left:1309.2px;top:868.9px;font-size:14.400px;color:#000">2.25</div><div class="t" style="left:1394.2px;top:868.9px;font-size:14.400px;color:#000">DNA</div><div class="t" style="left:1512.2px;top:868.9px;font-size:14.400px;color:#000">50.00</div><div class="t" style="left:469.2px;top:889.9px;font-size:14.400px;color:#fff">5</div><div class="t" style="left:510.2px;top:889.9px;font-size:14.400px;color:#fff">C14 B</div><div class="t" style="left:611.2px;top:889.9px;font-size:14.400px;color:#fff">TP-SSV</div><div class="t" style="left:716.2px;top:889.9px;font-size:14.400px;color:#fff">26.11.2024 09:16</div><div class="t" style="left:844.2px;top:889.9px;font-size:14.400px;color:#fff">393.2</div><div class="t" style="left:956.2px;top:889.9px;font-size:14.400px;color:#fff">ng/µl</div><div class="t" style="left:1013.2px;top:889.9px;font-size:14.400px;color:#fff">7.864</div><div class="t" style="left:1119.2px;top:889.9px;font-size:14.400px;color:#fff">4.111</div><div class="t" style="left:1224.2px;top:889.9px;font-size:14.400px;color:#fff">1.91</div><div class="t" style="left:1309.2px;top:889.9px;font-size:14.400px;color:#fff">2.24</div><div class="t" style="left:1394.2px;top:889.9px;font-size:14.400px;color:#fff">DNA</div><div class="t" style="left:1512.2px;top:889.9px;font-size:14.400px;color:#fff">50.00</div><div class="a" style="left:0;top:1032px;width:1920px;height:48px;background:linear-gradient(90deg,#e3ecf8 0%,#e1e9f7 25%,#d9e0f4 50%,#dfe7f6 75%,#e3ecf8 100%);border-top:1px solid #d0d4dc"></div>
<!-- widget -->
<svg class="a" style="left:16px;top:1036px" width="34" height="36" viewBox="0 0 34 36">
<ellipse cx="13" cy="19.500" rx="9" ry="3.300" fill="#e08a00"/><ellipse cx="13" cy="18" rx="9" ry="3.300" fill="#f9b21e"/>
<ellipse cx="14.500" cy="14" rx="9" ry="3.300" fill="#e08a00"/><ellipse cx="14.500" cy="12.500" rx="9" ry="3.300" fill="#fbbb2a"/>
<circle cx="22" cy="10" r="7.600" fill="#c42b1c"/>
<path d="M21,6.800L22.800,6V14" fill="none" stroke="#fff" stroke-width="1.300"/>
<path d="M10.500,30L14.500,26.200L18.500,30" fill="none" stroke="#5db32a" stroke-width="2.200"/>
</svg>
<div class="t" style="left:50.500px;top:1042.300px;font-size:11.400px;color:#1b1b1b">GBP/CAD</div>
<div class="t" style="left:50.500px;top:1058.700px;font-size:11.400px;color:#2b8a2b">+0.81%</div>
<!-- windows logo -->
<svg class="a" style="left:727px;top:1045px" width="23" height="23" viewBox="0 0 23 23"><defs><linearGradient id="gW" x1="0" y1="0" x2="1" y2="1"><stop offset="0" stop-color="#4cc2f5"/><stop offset="1" stop-color="#0a6cd6"/></linearGradient></defs><g fill="url(#gW)"><rect x="0" y="0" width="11" height="11" rx="0.800"/><rect x="12" y="0" width="11" height="11" rx="0.800"/><rect x="0" y="12" width="11" height="11" rx="0.800"/><rect x="12" y="12" width="11" height="11" rx="0.800"/></g></svg>
<!-- search pill -->
<div class="a" style="left:763.500px;top:1040.500px;width:218px;height:31px;border-radius:15.500px;background:#f5f8fd;border:1px solid #c9d0e0"></div>
<svg class="a" style="left:774px;top:1047px" width="18" height="18" viewBox="0 0 18 18"><circle cx="7.500" cy="7.500" r="5" fill="none" stroke="#222" stroke-width="1.400"/><path d="M11.200,11.200L15.500,15.500" stroke="#222" stroke-width="1.500"/></svg>
<div class="t" style="left:800px;top:1049.500px;font-size:13px;color:#5a5a5a">Search</div>
<svg class="a" style="left:928px;top:1044px" width="52" height="24" viewBox="0 0 52 24">
<path d="M3,3.500L7,2L22,14L19.500,17.500Z" fill="#f2b632" stroke="#b98516" stroke-width="0.600"/><path d="M19.500,17.500L22,14L25.500,19.500Z" fill="#d9dbe0"/><path d="M3,3.500L7,2L9,3.600L5,5.200Z" fill="#e8d8a0"/>
<path d="M24,20C27,15 28.500,12.500 30.500,13C32.500,13.500 31.500,19 34,18.500C36.500,18 36,12.500 38.500,13C41,13.500 40,18.500 42.500,18C45,17.500 46,13 49,11.500" fill="none" stroke="#1a1650" stroke-width="2"/>
</svg>
<!-- task view -->

<div class="a" style="left:1000.500px;top:1045px;width:18.500px;height:15.500px;border-radius:1.500px;background:linear-gradient(135deg,#ffffff,#e9ebef)"></div>
<div class="a" style="left:995px;top:1051px;width:18px;height:16px;border-radius:1.500px;background:linear-gradient(180deg,#2a2a2a,#111)"></div>
<div class="a" style="left:1000.500px;top:1051px;width:12.500px;height:9.500px;background:linear-gradient(135deg,#c4c4c4,#9c9c9c)"></div>
<!-- edge -->
<svg class="a" style="left:1082px;top:1044px" width="26" height="26" viewBox="0 0 26 26"><defs><linearGradient id="gE1" x1="0.100" y1="0.200" x2="0.700" y2="1"><stop offset="0" stop-color="#2a8fe0"/><stop offset="1" stop-color="#0c4fa0"/></linearGradient><linearGradient id="gE2" x1="0" y1="0.600" x2="1" y2="0.200"><stop offset="0" stop-color="#2ba3e4"/><stop offset="0.550" stop-color="#3fcf9a"/><stop offset="1" stop-color="#86e04a"/></linearGradient><linearGradient id="gE3" x1="0" y1="0" x2="1" y2="1"><stop offset="0" stop-color="#49bdf0"/><stop offset="1" stop-color="#1e78d0"/></linearGradient></defs>
<path d="M1.500,13C1.500,5.500 7,1.200 13,1.200C20,1.200 24.700,6.500 24.700,12C24.700,15.800 22,17.800 19,17.800C16.600,17.800 15.300,16.700 15.300,15.300C15.300,14.300 16,13.800 16,12.700C16,10.800 14.200,9.300 12,9.300C8,9.300 3.500,11.500 1.500,13Z" fill="url(#gE2)"/>
<path d="M1.500,13C1.500,20 7,24.800 13,24.800C17.500,24.800 21.500,22.500 23.300,19C21,20.500 17,21 13.500,19.300C9.800,17.500 8.300,13.800 10.300,10.500C10.800,9.900 11.300,9.500 12,9.300C7,9 2.500,10.500 1.500,13Z" fill="url(#gE1)"/>
<path d="M10.300,10.500C8.300,13.800 9.800,17.500 13.500,19.300C17,21 21,20.500 23.300,19C21,20 18,19.800 16,18.300C14,16.800 13.800,14.500 14.300,13.300C13.500,11.500 12,10.300 10.300,10.500Z" fill="url(#gE3)"/>
</svg>
<!-- active app -->
<div class="a" style="left:1120.500px;top:1037px;width:37.500px;height:38.500px;border-radius:4px;background:#eef3fb;border:1px solid #e3e8f2"></div>
<svg class="a" style="left:1127px;top:1044px" width="25" height="25" viewBox="0 0 25 25">
<defs><linearGradient id="gApp" x1="0" y1="0" x2="1" y2="1"><stop offset="0" stop-color="#9aa8d6"/><stop offset="1" stop-color="#6478b8"/></linearGradient></defs>
<rect x="0" y="0.300" width="24" height="23.500" rx="1" fill="url(#gApp)" stroke="#5a6aa5" stroke-width="0.500"/>
<rect x="1.200" y="1.300" width="21.500" height="5.700" rx="2.800" fill="#050507"/><rect x="1.200" y="16.300" width="21.500" height="5.700" rx="2.800" fill="#050507"/>
<path d="M6,7H18L15.500,11.500L18,16.300H6L8.500,11.500Z" fill="#33339a"/><ellipse cx="12" cy="11.500" rx="2.200" ry="1.300" fill="#8fa4e0"/>
</svg>
<div class="a" style="left:1131px;top:1072px;width:16px;height:3px;border-radius:1.500px;background:#1a73d8"></div>
<!-- paint -->
<svg class="a" style="left:1170px;top:1043px" width="28" height="28" viewBox="0 0 28 28">
<path d="M13,2C20,2 25,6.500 25,12C25,15 23,17 20,17H18C16.500,17 16,18.500 17,19.500C18.500,21 17,24 13.500,24C7,24 2,19.500 2,13C2,7 7,2 13,2Z" fill="#3fa7e6" stroke="#1d7fc4" stroke-width="0.700"/>
<circle cx="8" cy="9" r="2" fill="#e9453a"/><circle cx="13.500" cy="6.500" r="2" fill="#f5c02c"/><circle cx="19" cy="9" r="2" fill="#56c456"/><circle cx="7" cy="15" r="2" fill="#f0f4f8"/>
<rect x="20.500" y="6" width="3" height="14" rx="1" fill="#b9793a" transform="rotate(8 22 13)"/><path d="M19,19L23,19.500L21.500,26L19.500,26Z" fill="#7a4a1e"/><rect x="20" y="4" width="3.500" height="4" fill="#d9dde2" transform="rotate(8 22 6)"/>
</svg>
<div class="a" style="left:1180.500px;top:1072px;width:6px;height:3px;border-radius:1.500px;background:#7e848c"></div>
<!-- tray -->
<svg class="a" style="left:1688px;top:1050px" width="14" height="12" viewBox="0 0 14 12"><path d="M2,8.500L7,3.500L12,8.500" fill="none" stroke="#222" stroke-width="1.300"/></svg>
<div class="t" style="left:1722.500px;top:1052px;font-size:10.800px;color:#1b1b1b">FRA</div>
<svg class="a" style="left:1762px;top:1047px" width="18" height="18" viewBox="0 0 18 18" fill="none" stroke="#222" stroke-width="1.100"><rect x="1.500" y="1.800" width="11" height="9.500" rx="1"/><path d="M5,15.500H13M7,11.500V15.500"/><rect x="12.500" y="1.500" width="3.600" height="6" rx="0.800" fill="#e0e9f7"/><path d="M14.300,7.500V15.500"/><path d="M12.800,3.300H16"/></svg>
<svg class="a" style="left:1786px;top:1047px" width="19" height="18" viewBox="0 0 19 18" fill="none" stroke="#222" stroke-width="1.100"><path d="M1.500,6.500H4L8,3V15L4,11.500H1.500Z"/><path d="M10.500,6.500C11.500,8 11.500,10 10.500,11.500M12.800,4.800C14.500,7.300 14.500,10.700 12.800,13.200M15,3C17.500,6.500 17.500,11.500 15,15"/></svg>
<div class="t" style="left:1810px;width:67px;text-align:right;top:1042.500px;font-size:11.700px;color:#1b1b1b">09:16</div>
<div class="t" style="left:1810px;width:67px;text-align:right;top:1058.300px;font-size:11.700px;color:#1b1b1b">26.11.2024</div>
<svg class="a" style="left:1884px;top:1047px" width="16" height="18" viewBox="0 0 16 18"><path d="M8,1.500C11,1.500 13,4 13,7V10.500L14.500,13H1.500L3,10.500V7C3,4 5,1.500 8,1.500Z" fill="#0a50b4"/><path d="M6,14.500H10C10,15.800 9.200,16.500 8,16.500C6.800,16.500 6,15.800 6,14.500Z" fill="#0a50b4"/></svg>
</body></html>
